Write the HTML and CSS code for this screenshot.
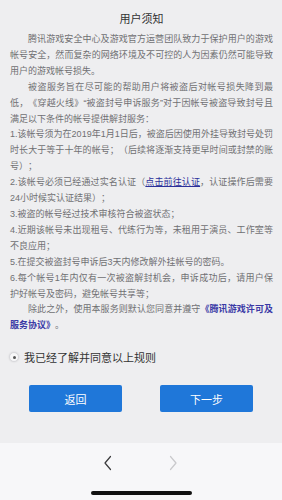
FILE: index.html
```html
<!DOCTYPE html>
<html lang="zh-CN">
<head>
    <meta charset="UTF-8">
    <meta name="viewport" content="width=device-width, initial-scale=1.0">
    <title>用户须知</title>
    <link rel="stylesheet" href="styles.css">
</head>
<body>
    <div class="page">
        <div class="notice">
            <h1>用户须知</h1>
            <div class="notice-text">
                <p class="indent">腾讯游戏安全中心及游戏官方运营团队致力于保护用户的游戏帐号安全，然而复杂的网络环境及不可控的人为因素仍然可能导致用户的游戏帐号损失。</p>
                <p class="indent">被盗服务旨在尽可能的帮助用户将被盗后对帐号损失降到最低，《穿越火线》“被盗封号申诉服务”对于因帐号被盗导致封号且满足以下条件的帐号提供解封服务：</p>
                <p>1.该帐号须为在2019年1月1日后，被盗后因使用外挂导致封号处罚时长大于等于十年的帐号；（后续将逐渐支持更早时间或封禁的账号）；</p>
                <p>2.该帐号必须已经通过实名认证（<a href="#" class="link-auth">点击前往认证</a>，认证操作后需要24小时候实认证结果）；</p>
                <p>3.被盗的帐号经过技术审核符合被盗状态；</p>
                <p>4.近期该帐号未出现租号、代练行为等，未租用于演员、工作室等不良应用；</p>
                <p>5.在提交被盗封号申诉后3天内修改解外挂帐号的密码。</p>
                <p>6.每个帐号1年内仅有一次被盗解封机会，申诉成功后，请用户保护好帐号及密码，避免帐号共享等；</p>
                <p class="indent">除此之外，使用本服务则默认您同意并遵守<a href="#" class="link-terms">《腾讯游戏许可及服务协议》</a>。</p>
            </div>
        </div>

        <label class="agree">
            <span class="radio"><span class="radio-dot"></span></span>
            <span>我已经了解并同意以上规则</span>
        </label>

        <div class="actions">
            <button class="btn">返回</button>
            <button class="btn">下一步</button>
        </div>
    </div>

    <div class="toolbar">
        <div class="toolbar-nav">
            <svg class="nav-arrow" width="10" height="16" viewBox="0 0 10 16">
                <polyline points="7.5,1.5 2,8 7.5,14.5" fill="none" stroke="#3a3a3c" stroke-width="1.2" stroke-linecap="round" stroke-linejoin="round"/>
            </svg>
            <svg class="nav-arrow" width="10" height="16" viewBox="0 0 10 16">
                <polyline points="2.5,1.5 8,8 2.5,14.5" fill="none" stroke="#c9c9cc" stroke-width="1.2" stroke-linecap="round" stroke-linejoin="round"/>
            </svg>
        </div>
        <div class="home-bar"></div>
    </div>
</body>
</html>
```

FILE: styles.css
```css
* {
    margin: 0;
    padding: 0;
    box-sizing: border-box;
}

body {
    font-family: "Noto Sans CJK SC", "Noto Sans", sans-serif;
    background-color: #eeeef0;
    width: 282px;
    height: 500px;
    display: flex;
    flex-direction: column;
    overflow: hidden;
}

.page {
    flex: 1;
}

.notice {
    padding: 10px 9px 0 10px;
}

.notice h1 {
    font-size: 11px;
    line-height: 16px;
    font-weight: normal;
    color: #333;
    text-align: center;
    margin-bottom: 6px;
}

.notice-text p {
    font-family: "Liberation Sans", "Noto Sans CJK SC", sans-serif;
    font-size: 9px;
    line-height: 15.9px;
    color: #707073;
    text-align: justify;
    text-spacing-trim: space-all;
}

.notice-text .indent {
    text-indent: 2em;
}

.link-auth {
    color: #2b2f9a;
    text-decoration: underline;
}

.link-terms {
    color: #3b3aa6;
    font-weight: bold;
    text-decoration: none;
}

.agree {
    display: flex;
    align-items: center;
    gap: 5px;
    margin: 16px 0 0 9px;
    font-size: 11px;
    line-height: 14px;
    color: #333;
}

.radio {
    width: 10px;
    height: 10px;
    border-radius: 50%;
    border: 1px solid #d8d8dc;
    background: #f7f7f8;
    box-shadow: 0 0 2px rgba(0, 0, 0, 0.12);
    display: flex;
    align-items: center;
    justify-content: center;
}

.radio-dot {
    width: 3px;
    height: 3px;
    border-radius: 50%;
    background: #555;
}

.actions {
    display: flex;
    justify-content: space-between;
    padding: 0 29px;
    margin-top: 21px;
}

.btn {
    width: 93px;
    height: 27px;
    border: none;
    border-radius: 2px;
    background-color: #1f77d9;
    color: #fff;
    font-family: inherit;
    font-size: 11px;
}

.toolbar {
    height: 57px;
    background-color: #f7f7f9;
    display: flex;
    flex-direction: column;
    align-items: center;
}

.toolbar-nav {
    display: flex;
    gap: 55px;
    margin-top: 12px;
    margin-right: 1px;
}

.home-bar {
    width: 101px;
    height: 4px;
    border-radius: 2px;
    background: #111;
    margin-top: 20px;
}
```
